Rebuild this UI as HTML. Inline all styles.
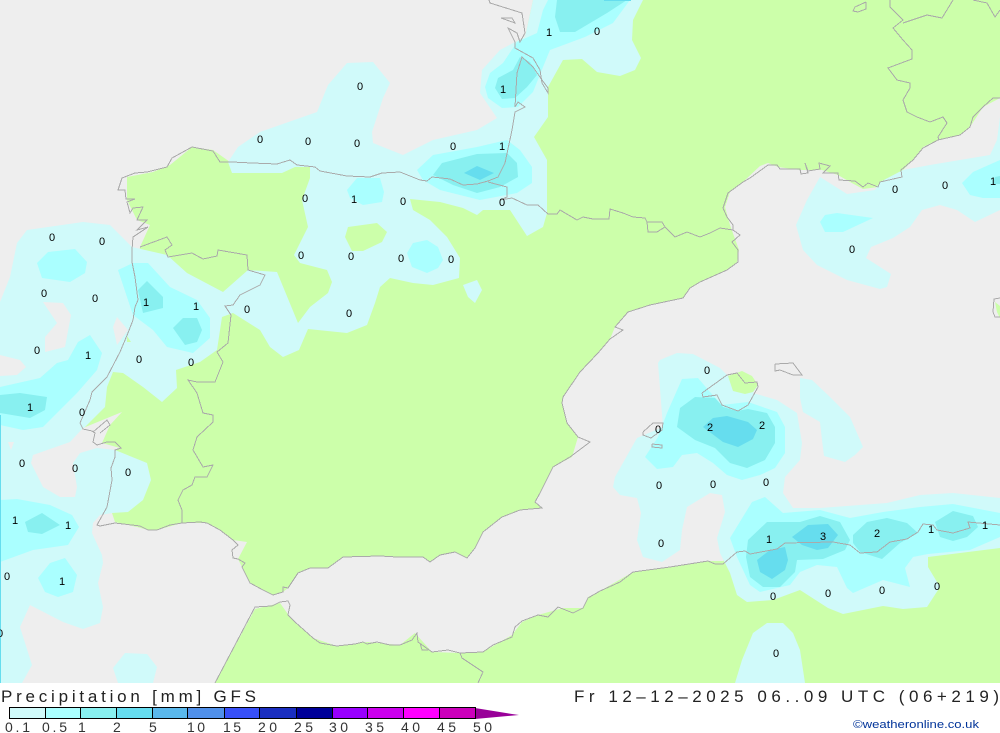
<!DOCTYPE html>
<html><head><meta charset="utf-8"><title>Precipitation GFS</title>
<style>
html,body{margin:0;padding:0;background:#fff;width:1000px;height:733px;overflow:hidden}
svg{display:block}
.n text{font:11px "Liberation Sans",sans-serif;text-anchor:middle;fill:#000}
.c polyline{fill:none;stroke:#aaa;stroke-width:1;shape-rendering:crispEdges}
.l text{font:14px "Liberation Sans",sans-serif;fill:#333}
.h{font-family:"Liberation Sans",sans-serif;font-size:17px;fill:#222}
</style></head><body>
<svg width="1000" height="733" viewBox="0 0 1000 733" xmlns="http://www.w3.org/2000/svg">
<rect width="1000" height="683" fill="#eeeeee"/>
<!-- land -->
<g fill="#ccffaa">
<polygon points="490,0 1000,0 1000,98 983,107 970,127 960,135 938,140 923,147 913,160 903,170 878,187 863,189 850,182 838,175 822,170 800,170 778,167 768,163 760,166 743,182 730,192 725,207 730,225 739,250 737,262 727,270 700,282 690,288 683,298 650,305 628,312 615,327 610,339 598,353 580,372 563,397 562,403 567,423 578,437 572,457 553,467 540,493 535,502 542,508 520,510 502,517 483,532 475,548 467,558 455,552 440,555 430,562 423,557 397,557 380,556 343,557 328,568 310,568 298,573 288,588 283,592 273,595 263,590 250,583 242,567 238,559 247,542 233,540 220,530 207,523 182,523 157,530 148,530 137,527 115,522 112,513 115,450 120,448 102,443 110,425 122,412 83,428 92,392 107,377 120,352 113,372 127,340 140,247 150,225 137,220 127,200 127,177 153,172 170,165 192,147 213,150 230,162 310,167 420,180 515,110 515,42 525,37 527,28 533,0"/>
<polygon points="215,683 255,609 280,603 290,617 313,638 337,646 367,642 400,645 415,633 432,652 460,653 483,652 500,642 512,635 522,622 538,615 563,608 583,608 588,597 600,591 633,572 670,567 708,561 723,561 745,545 1000,530 1000,683"/>
<polygon points="995,302 1000,306 1000,318 997,312"/>
</g>
<!-- level 1 -->
<g fill="#d0fafa">
<polygon points="548,0 643,0 633,20 632,40 641,58 635,70 620,76 597,72 582,59 563,60 548,87 548,117 534,137 547,160 547,213 543,227 527,236 510,210 483,210 477,215 463,208 440,202 410,199 413,210 430,220 447,237 460,258 459,278 433,285 413,283 390,278 380,287 375,303 367,325 347,333 308,329 299,350 283,357 270,347 260,330 233,313 222,317 217,350 200,362 176,370 177,388 162,402 143,387 123,373 113,372 107,387 105,407 85,427 83,428 70,442 33,455 31,463 43,487 60,497 75,497 77,487 73,463 80,453 97,448 115,450 147,463 151,480 143,500 128,512 112,513 100,515 93,523 92,533 102,555 103,563 98,583 103,607 100,623 83,629 63,622 30,605 20,627 32,665 22,683 0,683 0,302 10,277 17,243 27,230 83,222 110,225 132,247 167,255 187,273 223,292 248,270 277,272 298,323 310,307 328,293 332,282 327,270 300,263 294,255 308,227 302,200 310,178 310,167 295,167 282,173 232,173 228,162 238,147 260,132 317,112 328,85 347,63 373,62 390,83 383,98 372,132 373,143 403,155 433,140 477,130 497,118 480,93 482,70 500,50 515,42 525,37 527,28 533,0"/>
<polygon points="463,285 477,280 482,290 475,303 468,297"/>
<polygon points="125,653 147,654 157,667 153,683 118,683 113,668"/>
<polygon points="1000,117 997,140 990,155 930,165 903,170 880,182 875,190 847,194 820,177 807,200 796,225 803,250 817,265 847,280 880,289 887,287 891,274 866,258 871,247 893,238 910,227 922,210 940,205 957,210 975,222 1000,210"/>
<polygon points="660,360 667,357 677,353 693,354 720,368 728,376 742,371 758,385 753,393 777,400 797,413 802,443 800,460 785,477 783,493 793,508 820,508 887,503 920,495 953,493 1000,498 1000,548 928,557 928,567 940,587 927,607 903,609 883,606 843,614 828,608 800,590 773,600 747,602 737,595 730,573 720,553 717,538 725,512 722,495 710,493 687,507 682,530 680,550 662,562 643,557 637,540 641,513 637,498 620,495 613,487 615,477 637,438 663,427 658,363"/>
<polygon points="735,683 742,660 753,633 767,623 783,623 793,633 800,650 805,683"/>
<polygon points="800,378 812,380 830,397 850,417 860,440 863,447 855,455 845,462 824,456 822,440 820,422 803,412 800,398"/>
</g>
<!-- holes -->
<g fill="#eeeeee">
<polygon points="43,302 63,303 71,315 65,347 45,352 45,337 57,323"/>
<polygon points="0,355 20,360 26,367 17,375 0,376"/>
<polygon points="8,442 14,442 11,450"/>
<polygon points="117,317 128,330 117,345 113,327"/>
</g>
<g fill="#ccffaa">
<polygon points="345,237 348,227 377,223 387,232 382,242 363,251 352,251"/>
<polygon points="728,376 742,371 752,376 758,385 753,392 745,394 733,391"/>
<polygon points="127,336 131,342 127,342"/>
</g>
<!-- level 2 -->
<g fill="#aaffff">
<polygon points="548,0 630,0 613,23 585,37 550,50 543,67 533,92 518,107 502,108 488,98 485,87 490,73 503,63 517,42 537,33 543,10"/>
<polygon points="417,170 433,155 477,147 507,140 520,150 532,167 532,183 517,193 480,200 440,190 423,180"/>
<polygon points="347,190 357,178 380,178 384,192 382,202 363,205 350,198"/>
<polygon points="407,253 413,243 427,240 438,247 443,260 438,268 427,273 412,267"/>
<polygon points="37,263 48,252 75,249 87,262 85,273 70,282 42,278"/>
<polygon points="118,270 133,263 148,263 170,287 197,300 210,318 210,338 193,353 167,347 153,330 133,315 127,297"/>
<polygon points="0,387 40,378 57,363 68,360 78,342 90,335 102,353 97,370 77,393 43,427 23,430 0,425"/>
<polygon points="0,500 17,499 50,505 72,515 79,527 68,545 33,550 0,562"/>
<polygon points="38,578 50,563 65,558 77,575 73,592 58,597 45,592"/>
<polygon points="820,222 825,215 837,213 873,218 843,232 825,232"/>
<polygon points="962,183 973,172 1000,160 1000,198 983,198 970,195"/>
<polygon points="682,379 698,378 710,392 722,405 748,402 777,412 785,427 785,453 775,468 760,475 742,480 727,475 713,463 697,453 682,455 673,467 657,469 645,457 658,437 667,413"/>
<polygon points="765,497 783,513 820,510 850,518 883,512 920,507 953,504 1000,513 1000,537 970,550 928,554 913,557 905,568 910,587 883,580 853,593 847,588 837,567 817,565 800,572 790,585 760,592 750,585 737,557 730,538 752,502"/>
</g>
<!-- level 3 -->
<g fill="#88f0f0">
<polygon points="557,0 627,0 607,13 575,32 560,32 555,17"/>
<polygon points="520,57 530,62 537,75 527,87 515,98 502,99 495,88 498,78 513,70"/>
<polygon points="433,175 442,163 477,154 507,153 517,163 518,177 500,187 477,193 453,185"/>
<polygon points="138,290 147,281 163,297 163,308 143,313"/>
<polygon points="173,328 183,318 197,318 202,330 197,342 185,345"/>
<polygon points="0,395 20,393 47,397 45,410 30,418 0,413"/>
<polygon points="25,522 42,513 60,525 42,534 28,532"/>
<polygon points="995,177 1000,176 1000,184 993,184"/>
<polygon points="680,408 695,397 715,398 723,407 737,411 748,409 767,413 775,427 775,443 765,460 747,468 730,463 715,448 695,440 677,427"/>
<polygon points="767,522 800,522 820,516 840,522 850,540 845,550 823,559 797,560 795,572 780,587 763,587 750,577 746,557 748,540"/>
<polygon points="853,535 867,522 887,518 907,523 918,533 900,543 882,559 860,552 853,543"/>
<polygon points="935,522 953,511 973,516 978,527 967,537 953,541 940,537"/>
</g>
<!-- level 4 -->
<g fill="#66ddee">
<rect x="604" y="0" width="27" height="1"/>
<polygon points="464,173 477,166 494,173 480,180"/>
<polygon points="703,427 713,418 727,416 748,422 757,430 753,439 738,447 723,442"/>
<polygon points="792,537 808,525 828,524 838,535 828,548 817,550 802,545"/>
<polygon points="757,560 770,550 785,547 788,560 785,570 772,579 760,572"/>
<rect x="0" y="415" width="1" height="268"/>
</g>
<!-- coast -->
<g class="c">
<polyline points="489,0 490,3 522,13 525,33 520,42 517,33 508,28 515,42 515,48 533,58 540,70 542,83 548,93 548,88 542,80 533,67 522,57 517,73 515,107 518,102 525,107 515,112 512,130 505,163 498,177 488,181 477,184 463,185 450,179 432,177 427,181 420,180 400,172 382,173 370,177 347,176 320,171 315,167 297,165 290,160 277,164 252,163 232,162 220,162 213,151 192,147 172,158 167,167 147,172 135,173 122,178 118,190 125,190 126,199 135,199 127,202 130,213 133,208 143,207 137,220 147,220 137,230 148,227 133,237 132,250 132,262 135,277 138,300 135,307 133,320 128,333 120,352 107,377 97,387 92,392 90,400 80,423 83,429 92,431 95,433 93,442 97,445 107,442 115,442 121,448 115,450 115,457 111,468 112,480 107,507 97,525 100,526 115,523 140,526 148,530 157,530 170,525 182,523 200,522 207,523 220,530 233,540 238,545 232,550 233,558 238,559 245,563 242,567 250,583 263,590 273,595 283,592 283,587 288,588 298,573 310,568 328,568 343,557 380,556 397,557 423,557 430,562 440,555 455,552 467,558 475,548 483,532 502,517 520,510 542,508 535,502 540,493 553,467 570,457 590,442 578,437 567,423 562,403 563,397 580,372 598,353 610,339 623,330 615,327 628,312 650,305 683,298 690,288 700,282 727,270 738,262 738,250 732,242 740,235 733,230 733,225 727,217 723,208 728,193 743,182 750,178 768,165 777,165 780,169 800,169 801,174 808,173 805,163 808,171 820,169 819,163 830,166 823,173 838,173 839,180 855,181 863,187 868,183 878,187 880,182 902,177 901,170 913,160 923,148 938,140 960,135 970,127 973,117 983,107 993,98 1000,98"/>
<polyline points="501,18 515,23 512,18 501,18"/>
<polyline points="140,247 167,237 172,245 165,250 168,257 192,253 203,259 217,256 218,250 247,255 248,270 265,275 260,285 240,295 233,305 225,306 231,315 228,343 217,352 223,362 215,382 197,382 188,380 197,393 203,413 213,415 213,422 197,437 193,450 203,467 213,465 207,477 195,477 192,485 183,490 178,500 182,510 182,523"/>
<polyline points="93,432 107,420 110,425 100,433"/>
<polyline points="488,182 507,187 507,197 500,200 512,198 527,205 538,205 548,214 557,214 560,210 577,220 583,217 593,219 609,219 610,209 623,213 633,217 645,218 647,222 662,222 665,227 657,232 648,232 647,222"/>
<polyline points="665,227 675,237 687,232 700,237 710,233 720,228 733,230"/>
<polyline points="890,0 890,7 903,20 893,28 903,40 912,50 912,59 888,68 897,80 910,83 910,88 903,100 907,112 917,117 930,122 943,117 947,123 938,137 939,140"/>
<polyline points="903,23 927,15 942,18 953,0"/>
<polyline points="973,0 987,3 995,17 1000,10"/>
<polyline points="866,2 855,7 853,11 858,12 866,9 866,2"/>
<polyline points="1000,298 994,299 993,312 995,317 1000,317"/>
<polyline points="215,683 255,607 272,606 280,602 288,601 290,605 288,615 295,622 313,638 320,643 337,646 355,644 363,642 367,644 377,642 390,645 400,645 412,640 417,633 418,642 432,652 448,650 460,653 483,652 493,645 512,637 515,627 522,621 538,615 548,617 558,607 573,613 583,608 588,598 600,591 620,582 633,572 670,567 708,561 715,564 723,564 737,552 745,551 750,554 777,549 785,543 833,542 850,545 860,553 877,552 890,542 907,539 918,532 923,524 933,525 937,530 953,533 970,528 968,522 1000,525"/>
<polyline points="460,653 462,658 483,672 478,683"/>
<polyline points="420,643 422,650 428,650"/>
<polyline points="702,393 727,375 737,373 745,383 757,382 758,387 748,405 738,411 722,405 717,395 703,397 702,393"/>
<polyline points="775,364 793,363 802,375 793,375 780,370 775,371 775,364"/>
<polyline points="643,432 653,423 663,423 662,430 651,438 643,435 643,432"/>
<polyline points="652,444 662,445 662,448 652,447 652,444"/>
</g>
<!-- values -->
<g class="n">
<text x="360" y="90">0</text><text x="260" y="143">0</text><text x="308" y="145">0</text><text x="357" y="147">0</text><text x="453" y="150">0</text><text x="502" y="150">1</text><text x="549" y="36">1</text><text x="597" y="35">0</text><text x="503" y="93">1</text>
<text x="305" y="202">0</text><text x="354" y="203">1</text><text x="403" y="205">0</text><text x="502" y="206">0</text><text x="301" y="259">0</text><text x="351" y="260">0</text><text x="401" y="262">0</text><text x="451" y="263">0</text><text x="247" y="313">0</text><text x="349" y="317">0</text>
<text x="52" y="241">0</text><text x="102" y="245">0</text><text x="44" y="297">0</text><text x="95" y="302">0</text><text x="146" y="306">1</text><text x="196" y="310">1</text><text x="37" y="354">0</text><text x="88" y="359">1</text><text x="139" y="363">0</text><text x="191" y="366">0</text><text x="30" y="411">1</text><text x="82" y="416">0</text><text x="22" y="467">0</text><text x="75" y="472">0</text><text x="128" y="476">0</text><text x="15" y="524">1</text><text x="68" y="529">1</text><text x="7" y="580">0</text><text x="62" y="585">1</text><text x="0" y="637">0</text>
<text x="707" y="374">0</text><text x="658" y="433">0</text><text x="710" y="431">2</text><text x="762" y="429">2</text><text x="659" y="489">0</text><text x="713" y="488">0</text><text x="766" y="486">0</text><text x="661" y="547">0</text><text x="769" y="543">1</text><text x="823" y="540">3</text><text x="877" y="537">2</text><text x="931" y="533">1</text><text x="985" y="529">1</text><text x="773" y="600">0</text><text x="828" y="597">0</text><text x="882" y="594">0</text><text x="937" y="590">0</text><text x="776" y="657">0</text><text x="852" y="253">0</text><text x="895" y="193">0</text><text x="945" y="189">0</text><text x="993" y="185">1</text>
</g>
<!-- header -->
<text class="h" x="1" y="702" textLength="255" lengthAdjust="spacing">Precipitation [mm] GFS</text>
<text class="h" x="574" y="702" textLength="425" lengthAdjust="spacing">Fr 12–12–2025 06..09 UTC (06+219)</text>
<!-- legend -->
<polygon points="475,708 475,719 519,715 512,714" fill="#990099"/>
<g stroke="#000" stroke-width="1" shape-rendering="crispEdges">
<rect x="9.5" y="707.5" width="36" height="11" fill="#d0fafa"/>
<rect x="45.5" y="707.5" width="35" height="11" fill="#aaffff"/>
<rect x="80.5" y="707.5" width="36" height="11" fill="#88f0f0"/>
<rect x="116.5" y="707.5" width="36" height="11" fill="#66ddf0"/>
<rect x="152.5" y="707.5" width="35" height="11" fill="#5ab8ec"/>
<rect x="187.5" y="707.5" width="37" height="11" fill="#5090ea"/>
<rect x="224.5" y="707.5" width="35" height="11" fill="#3850f8"/>
<rect x="259.5" y="707.5" width="37" height="11" fill="#1a2ec0"/>
<rect x="296.5" y="707.5" width="36" height="11" fill="#000099"/>
<rect x="332.5" y="707.5" width="35" height="11" fill="#9900ff"/>
<rect x="367.5" y="707.5" width="36" height="11" fill="#cc00ee"/>
<rect x="403.5" y="707.5" width="36" height="11" fill="#ff00ff"/>
<rect x="439.5" y="707.5" width="36" height="11" fill="#cc00bb"/>
</g>
<g class="l">
<text x="5" y="732" textLength="25" lengthAdjust="spacing">0.1</text>
<text x="42" y="732" textLength="25" lengthAdjust="spacing">0.5</text>
<text x="78" y="732">1</text>
<text x="113" y="732">2</text>
<text x="149" y="732">5</text>
<text x="187" y="732" textLength="18" lengthAdjust="spacing">10</text>
<text x="223" y="732" textLength="18" lengthAdjust="spacing">15</text>
<text x="258" y="732" textLength="19" lengthAdjust="spacing">20</text>
<text x="294" y="732" textLength="19" lengthAdjust="spacing">25</text>
<text x="329" y="732" textLength="19" lengthAdjust="spacing">30</text>
<text x="365" y="732" textLength="19" lengthAdjust="spacing">35</text>
<text x="401" y="732" textLength="19" lengthAdjust="spacing">40</text>
<text x="437" y="732" textLength="19" lengthAdjust="spacing">45</text>
<text x="473" y="732" textLength="19" lengthAdjust="spacing">50</text>
</g>
<text x="853" y="728" font-family="Liberation Sans, sans-serif" font-size="11" fill="#003399" textLength="126" lengthAdjust="spacingAndGlyphs">©weatheronline.co.uk</text>
</svg>
</body></html>
